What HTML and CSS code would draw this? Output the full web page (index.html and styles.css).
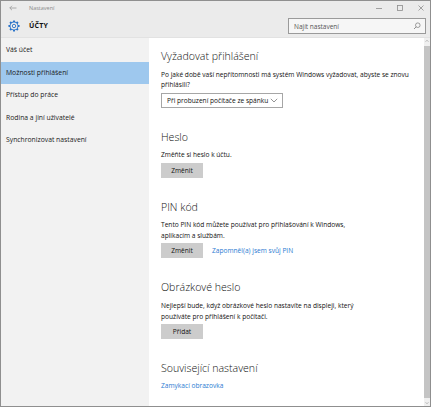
FILE: index.html
```html
<!DOCTYPE html>
<html>
  <head>
  <meta charset='UTF-8'>
  <title>Nastavení</title>
    <link rel="stylesheet" href="styles.css">
  </head>
  <body>
    <div class="window">
      <div class="top">
        <div class="titlebar">
          <svg class="back" width="8" height="6" viewBox="0 0 8 6"><path d="M7.5 3H0.8M3 0.8L0.8 3 3 5.2" fill="none" stroke="#9a9a9a" stroke-width="0.8"/></svg>
          <span class="title">Nastavení</span>
          <div class="controls">
            <svg width="8" height="8" viewBox="0 0 8 8"><path d="M1 4.5H7" stroke="#8d8d8d" stroke-width="0.8"/></svg>
            <svg width="8" height="8" viewBox="0 0 8 8"><rect x="1.5" y="1.5" width="5" height="5" fill="none" stroke="#8d8d8d" stroke-width="0.8"/></svg>
            <svg width="8" height="8" viewBox="0 0 8 8"><path d="M1.5 1.5L6.5 6.5M6.5 1.5L1.5 6.5" stroke="#8d8d8d" stroke-width="0.8"/></svg>
          </div>
        </div>
        <div class="header">
          <svg class="gear" width="12" height="12" viewBox="0 0 12 12">
            <g fill="#2a73c9">
              <circle cx="6" cy="6" r="4.4"/>
              <rect x="5" y="0.4" width="2" height="11.2" rx="0.4"/>
              <rect x="5" y="0.4" width="2" height="11.2" rx="0.4" transform="rotate(45 6 6)"/>
              <rect x="5" y="0.4" width="2" height="11.2" rx="0.4" transform="rotate(90 6 6)"/>
              <rect x="5" y="0.4" width="2" height="11.2" rx="0.4" transform="rotate(135 6 6)"/>
            </g>
            <circle cx="6" cy="6" r="3.5" fill="#ebebeb"/>
            <circle cx="6" cy="6" r="1.7" fill="none" stroke="#2a73c9" stroke-width="0.9"/>
          </svg>
          <span class="section-name">ÚČTY</span>
          <div class="search">
            <span>Najít nastavení</span>
            <svg width="8" height="8" viewBox="0 0 8 8"><circle cx="4.8" cy="3.2" r="2.3" fill="none" stroke="#777" stroke-width="0.7"/><path d="M3.2 4.8L1 7" stroke="#777" stroke-width="0.8"/></svg>
          </div>
        </div>
      </div>
      <div class="main">
        <div class="sidebar">
          <div class="nav-item">Váš účet</div>
          <div class="nav-item selected">Možnosti přihlášení</div>
          <div class="nav-item">Přístup do práce</div>
          <div class="nav-item">Rodina a jiní uživatelé</div>
          <div class="nav-item">Synchronizovat nastavení</div>
        </div>
        <div class="content">
          <div class="section first">
            <h2>Vyžadovat přihlášení</h2>
            <p>Po jaké době vaší nepřítomnosti má systém Windows vyžadovat, abyste se znovu přihlásili?</p>
            <div class="select">
              <span>Při probuzení počítače ze spánku</span>
              <svg width="8" height="5" viewBox="0 0 8 5"><path d="M0.8 0.8L4 4 7.2 0.8" fill="none" stroke="#666" stroke-width="0.7"/></svg>
            </div>
          </div>
          <div class="section">
            <h2>Heslo</h2>
            <p>Změňte si heslo k účtu.</p>
            <div class="actions"><span class="button">Změnit</span></div>
          </div>
          <div class="section">
            <h2>PIN kód</h2>
            <p class="narrow">Tento PIN kód můžete používat pro přihlašování k Windows, aplikacím a službám.</p>
            <div class="actions"><span class="button">Změnit</span><a class="link">Zapomněl(a) jsem svůj PIN</a></div>
          </div>
          <div class="section">
            <h2>Obrázkové heslo</h2>
            <p class="narrow">Nejlepší bude, když obrázkové heslo nastavíte na displeji, který používáte pro přihlášení k počítači.</p>
            <div class="actions"><span class="button">Přidat</span></div>
          </div>
          <div class="section">
            <h2>Související nastavení</h2>
            <a class="link related">Zamykací obrazovka</a>
          </div>
        </div>
        <div class="scrollbar">
          <svg width="6" height="6" viewBox="0 0 6 6"><path d="M1.5 3.8L3 2.2 4.5 3.8" fill="none" stroke="#999" stroke-width="0.6"/></svg>
          <div class="thumb"></div>
          <svg width="6" height="6" viewBox="0 0 6 6"><path d="M1.5 2.2L3 3.8 4.5 2.2" fill="none" stroke="#999" stroke-width="0.6"/></svg>
        </div>
      </div>
    </div>
  </body>
</html>
```

FILE: styles.css
```css
html, body {
  margin: 0;
  padding: 0;
  background: white;
  font-family: 'Open Sans', 'Noto Sans', sans-serif;
  color: #111;
}
.window {
  width: 431px;
  height: 407px;
  box-sizing: border-box;
  border: 1px solid #8f8f8f;
  display: flex;
  flex-direction: column;
  overflow: hidden;
}
.top {
  background: #ebebeb;
  border-bottom: 1px solid #e2e2e2;
}
.titlebar {
  height: 13px;
  display: flex;
  align-items: center;
  padding-left: 8px;
}
.back {
  margin-right: 12px;
}
.title {
  font-size: 5.5px;
  color: #8a8a8a;
}
.controls {
  margin-left: auto;
  display: flex;
  gap: 13px;
  padding-right: 5px;
  padding-top: 1px;
}
.header {
  height: 23px;
  display: flex;
  align-items: center;
  padding-left: 7px;
}
.section-name {
  margin-left: 9px;
  font-size: 7px;
  font-weight: 700;
  letter-spacing: 0.2px;
}
.search {
  margin-left: auto;
  margin-right: 4px;
  margin-top: 1px;
  width: 138px;
  height: 16px;
  box-sizing: border-box;
  border: 1px solid #9a9a9a;
  background: #f6f6f6;
  display: flex;
  align-items: center;
  justify-content: space-between;
  padding: 0 4px 0 5px;
  font-size: 6.5px;
  color: #555;
}
.main {
  flex: 1;
  display: flex;
  min-height: 0;
}
.sidebar {
  width: 148px;
  background: #f2f2f2;
  padding-top: 1px;
}
.nav-item {
  height: 22.5px;
  line-height: 22.5px;
  padding-left: 5px;
  font-size: 6.8px;
  color: #1a1a1a;
}
.selected {
  background: #9ec8ee;
}
.content {
  flex: 1;
  padding-left: 12px;
  padding-right: 8px;
}
.section {
  margin-top: 21px;
}
.section.first {
  margin-top: 10px;
}
h2 {
  margin: 0;
  font-size: 10.6px;
  font-weight: 300;
  line-height: 16px;
  color: #111;
}
p {
  margin: 5.5px 0 0;
  font-size: 6.6px;
  line-height: 10.6px;
}
.narrow {
  width: 200px;
}
.select {
  margin-top: 2px;
  width: 122px;
  height: 15px;
  box-sizing: border-box;
  border: 1px solid #a6a6a6;
  display: flex;
  align-items: center;
  justify-content: space-between;
  padding: 0 4px 0 5px;
  font-size: 6.6px;
}
.actions {
  margin-top: 2px;
  display: flex;
  align-items: center;
}
.button {
  width: 42px;
  height: 15px;
  line-height: 15px;
  text-align: center;
  background: #cccccc;
  font-size: 6.6px;
}
.link {
  color: #2b7bd2;
  font-size: 6.6px;
  margin-left: 9px;
}
.related {
  display: block;
  margin: 5px 0 0;
}
.scrollbar {
  width: 6px;
  background: #f0f0f0;
  display: flex;
  flex-direction: column;
  align-items: center;
}
.thumb {
  flex: 1;
  width: 6px;
  margin: 2px 0;
  background: #c4c4c4;
}
```
